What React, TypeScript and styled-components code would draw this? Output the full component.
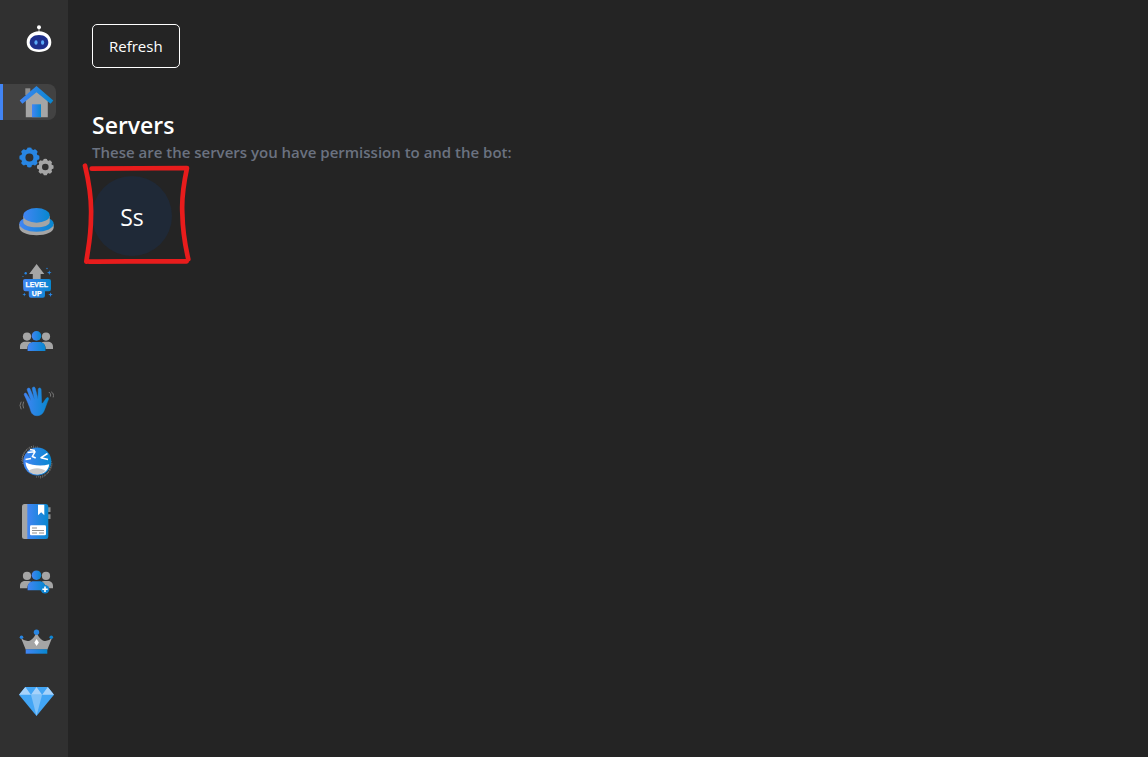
import React from "react";
import styled, { createGlobalStyle } from "styled-components";

const GlobalStyle = createGlobalStyle`
  *, *::before, *::after { box-sizing: border-box; }
  body {
    margin: 0;
    background: #242424;
    color: #ffffff;
    font-family: "Open Sans", "Noto Sans", sans-serif;
  }
`;

const Shell = styled.div`
  display: flex;
  min-height: 100vh;
`;

const Sidebar = styled.nav`
  flex: 0 0 68px;
  min-width: 0;
  display: flex;
  flex-direction: column;
  gap: 24px;
  padding: 24px 12px 24px 0;
  background: #303030;
`;

const Logo = styled.a`
  display: block;
  height: 36px;
  padding-left: 21px;
`;

const NavItem = styled.a<{ $active?: boolean }>`
  display: block;
  height: 36px;
  padding-left: 15px;
  border-left: 3px solid ${(p) => (p.$active ? "#4285f4" : "transparent")};
  border-radius: 0 8px 8px 0;
  background: ${(p) => (p.$active ? "#424242" : "transparent")};
`;

const Icon = styled.svg`
  display: block;
  width: 36px;
  height: 36px;
  overflow: visible;
`;

const Main = styled.main`
  flex: 1;
  min-width: 0;
  padding: 24px;
`;

const RefreshButton = styled.button`
  display: block;
  height: 44px;
  padding: 0 16px;
  border: 1px solid #ffffff;
  border-radius: 5px;
  background: transparent;
  color: #ffffff;
  font-family: inherit;
  font-size: 15px;
  line-height: 24px;
`;

const Title = styled.h1`
  margin: 40px 0 0;
  font-size: 23px;
  font-weight: 600;
  line-height: 34px;
`;

const Subtitle = styled.p`
  margin: 0;
  color: #6b7280;
  font-size: 15px;
  font-weight: 600;
  line-height: 20px;
`;

const ServerList = styled.div`
  display: flex;
  flex-wrap: wrap;
  gap: 16px;
  padding-top: 14px;
`;

const Server = styled.div`
  position: relative;
`;

const Avatar = styled.button`
  display: block;
  width: 80px;
  height: 80px;
  padding: 2px 0 0;
  border: 0;
  border-radius: 50%;
  background: #1f2937;
  color: #ffffff;
  font-family: inherit;
  font-size: 23px;
  line-height: 32px;
`;

const Marker = styled.svg`
  position: absolute;
  left: -17px;
  top: -21px;
  width: 130px;
  height: 120px;
  pointer-events: none;
`;

const BLUE = "url(#blue)";
const GRAY = "#a5a5a5";

function Defs() {
  return (
    <defs>
      <linearGradient id="blue" x1="0" x2="1" y1="0" y2="0">
        <stop offset="0" stopColor="#4285f4" />
        <stop offset="1" stopColor="#0787cf" />
      </linearGradient>
    </defs>
  );
}

function Gear({ x, y, r, hole, fill }: { x: number; y: number; r: number; hole: number; fill: string }) {
  const teeth = [0, 45, 90, 135, 180, 225, 270, 315];
  return (
    <g transform={`translate(${x} ${y})`}>
      <circle r={(r * 0.84 + hole) / 2} fill="none" stroke={fill} strokeWidth={r * 0.84 - hole} />
      {teeth.map((a) => (
        <path
          key={a}
          transform={`rotate(${a})`}
          d={`M${-r * 0.26} ${-r * 0.72}L${-r * 0.2} ${-r * 0.96}Q${-r * 0.18} ${-r} 0 ${-r}Q${r * 0.18} ${-r} ${r * 0.2} ${-r * 0.96}L${r * 0.26} ${-r * 0.72}Z`}
          fill={fill}
        />
      ))}
    </g>
  );
}

function People() {
  return (
    <>
      <g fill={GRAY}>
        <circle cx="9" cy="12.6" r="4.1" />
        <circle cx="28" cy="12.6" r="4.1" />
        <path d="M2 25v-2.200c0-3.400 2.200-5 5.200-5h3.600c1.200 0 2 .3 2.700.8C10.200 20 9.500 22.400 9.300 25z" />
        <path d="M35 25v-2.200c0-3.400-2.200-5-5.200-5h-3.600c-1.200 0-2 .3-2.700.8 3.300 1.400 4 3.800 4.200 6.400z" />
      </g>
      <circle cx="18.500" cy="11.900" r="4.800" fill={BLUE} />
      <path d="M9.600 27v-2.500c0-4.400 2.400-6.500 6.200-6.500h5.400c3.800 0 6.200 2.100 6.200 6.500V27z" fill={BLUE} />
    </>
  );
}

const items: { name: string; art: React.ReactNode }[] = [
  {
    name: "Home",
    art: (
      <>
        <path d="M7.300 4.300h5v6.700h-5z" fill="#8f8f8f" />
        <path d="M7.800 15.500 18.600 6l11.200 9.500V33.200h-22z" fill={GRAY} />
        <path d="M14 20.300h9v12.900h-9z" fill={BLUE} />
        <path d="M18.500 2 35.300 16.500 32.600 19.800 18.500 8.300 4.400 19.800 1.700 16.500z" fill={BLUE} />
      </>
    ),
  },
  {
    name: "Settings",
    art: (
      <>
        <Gear x={11.400} y={13.400} r={10} hole={4} fill="#2886e3" />
        <Gear x={27.300} y={23} r={8.300} hole={3.300} fill={GRAY} />
      </>
    ),
  },
  {
    name: "Buttons",
    art: (
      <>
        <path d="M1.300 20v3.500c0 4.500 7.700 7.700 17.200 7.700s17.200-3.200 17.200-7.700V20z" fill={GRAY} />
        <ellipse cx="18.500" cy="19.800" rx="17.200" ry="7.900" fill={BLUE} />
        <path d="M5.300 12v6c0 3.300 6 5.300 13.200 5.300s13.200-2 13.200-5.300v-6z" fill={GRAY} />
        <ellipse cx="18.500" cy="11.400" rx="13.200" ry="7.300" fill={BLUE} />
      </>
    ),
  },
  {
    name: "Levels",
    art: (
      <>
        <path d="M18.600 0 26.300 10h-3.700v6h-7.800v-6h-3.700z" fill={GRAY} />
        <path
          d="M7 15h24q2 0 2 2v8q0 2.300-2 2.300h-4v4.200q0 2.200-2.200 2.200H13q-2.200 0-2.200-2.200v-4.200H7.500q-2.200 0-2.200-2.300l-.3-8q0-2 2-2z"
          fill={BLUE}
        />
        <g
          fill="#ffffff"
          stroke="#ffffff"
          strokeWidth=".25"
          fontFamily="Liberation Sans, sans-serif"
          fontSize="7"
          fontWeight="700"
          textAnchor="middle"
        >
          <text x="18.700" y="23">LEVEL</text>
          <text x="18.700" y="31.500">UP</text>
        </g>
        <g fill="#2886e3">
          <path d="m31.300 6.300.6 1.700 1.700.6-1.700.6-.6 1.700-.6-1.700-1.700-.6 1.700-.6zM32.500 28.300l.6 1.700 1.700.6-1.700.6-.6 1.700-.6-1.700-1.700-.6 1.700-.6zM6.300 28.500l.5 1.500 1.500.5-1.500.5-.5 1.500-.5-1.500-1.500-.5 1.500-.5z" />
          <circle cx="7.700" cy="9.300" r="1.200" />
          <circle cx="29" cy="4.500" r=".7" />
          <circle cx="5" cy="12.500" r=".6" />
        </g>
      </>
    ),
  },
  { name: "Members", art: <People /> },
  {
    name: "Welcome",
    art: (
      <>
        <path
          d="M13 27.500C11.500 22 8.500 15.500 6.400 11.200c-.9-1.900 1.300-2.900 2.300-1.300l4.500 7.200L9.300 6.200c-.7-2.100 2.100-3 2.900-1L16.500 15.500 14.300 5c-.4-2.200 2.500-2.700 3-.6l2.700 10.500.2-9.400c.1-2.100 2.900-2 2.900.1l.5 12.800c.2 1 .9 1.200 1.500.4l2.800-4c1.300-1.800 3.200-1.500 2.500.6-1.800 3.600-2.600 7.800-4.600 12-1.500 3-4 4.300-6.700 4.300-3.200 0-5.300-1.600-6.100-4.200z"
          fill={BLUE}
          stroke={BLUE}
          strokeWidth=".5"
        />
        <g fill="none" stroke="#777" strokeLinecap="round" strokeWidth="1">
          <path d="M31.200 8.200q2.200 1.200 1.500 4M33.500 8q2.800 1.500 1.800 5M5.500 18q-1.500 3 0 6M3 18q-2.200 3.300 0 7" />
        </g>
      </>
    ),
  },
  {
    name: "Fun",
    art: (
      <>
        <g fill="none" stroke="#777" strokeDasharray="1 1" strokeWidth="1">
          <path d="M5 20C3 9 9 3 20 3M4 17C4 8 10 2 17 2M18 33c10 0 16-6 15-17M22 34c7-2 12-8 12-15" />
        </g>
        <circle cx="19.300" cy="17.500" r="14" fill={BLUE} />
        <path d="M7.500 18.300c7 3.200 15.500 4.500 23.700 2-.6 6-5 10-11.500 10-6.700 0-11.500-4.500-12.200-12z" fill="#ffffff" />
        <path d="M10.500 27c4-3.600 12.500-3.800 17-.2-4 4.700-12.500 4.900-17 .2z" fill="#c9c9c9" />
        <path d="m9.500 8.500 7.500-.7-2.700 4.700 3.400 1.500M12 5.500l5 1M29.500 9.500 23 13.700l7 1.800M7.500 15.500l5.500-1" fill="none" stroke="#ffffff" strokeLinejoin="round" strokeWidth="1.500" />
      </>
    ),
  },
  {
    name: "Logs",
    art: (
      <>
        <path d="M29 3.300h3.500V8H29zM29 10.200h3.500V15H29z" fill="#8f8f8f" />
        <path d="M6.500 0H10v35H6.500Q4 35 4 32.500v-30Q4 0 6.500 0z" fill={GRAY} />
        <path d="M9.300 0H28q2.300 0 2.300 2.500v30Q30.300 35 28 35H9.300z" fill={BLUE} />
        <path d="M20 .7h6.300v10.500l-3.100-3-3.200 3z" fill="#ffffff" />
        <rect x="12" y="21.300" width="16" height="10" rx="1.300" fill="#ffffff" />
        <path d="M14 24h5M14 26.500h12M14 29h5M21 29h5" stroke="#8f8f8f" strokeWidth="1" />
      </>
    ),
  },
  {
    name: "Invites",
    art: (
      <>
        <g transform="translate(0 -.7)">
          <People />
        </g>
        <circle cx="27" cy="25.300" r="4.300" fill="#0f86d4" />
        <path d="M27 22.600V28M24.300 25.300h5.400" stroke="#ffffff" strokeWidth="1.600" />
      </>
    ),
  },
  {
    name: "Roles",
    art: (
      <>
        <path d="M3 14q5 4.500 9.200 2.500Q16.500 14 18.500 8q2 6 6.300 8.500Q29 18.500 34 14l-4.600 11.500H7.700z" fill={GRAY} />
        <path d="M7.700 25.300h21.600v4.400H7.700z" fill={BLUE} />
        <circle cx="18.500" cy="8.200" r="2.700" fill="#2886e3" />
        <circle cx="3.500" cy="13.300" r="1.800" fill="#2886e3" />
        <circle cx="33.300" cy="13.300" r="1.800" fill="#0f86d4" />
        <path d="m18.600 15 2.300 3.500-2.300 3.500-2.300-3.500z" fill="#ffffff" />
      </>
    ),
  },
  {
    name: "Premium",
    art: (
      <>
        <path d="M7.300 3h22.500L36 10.700 18.500 32 1 10.700z" fill="#42a5f5" />
        <path d="M1 10.700 7.300 3l5.700 7.700zM36 10.700 29.800 3l-5.700 7.700zM13 10.700 18.500 3l5.600 7.700z" fill="#a6d2fa" />
        <path d="M13 10.700h11.100L18.500 32z" fill="#7fc1f8" />
      </>
    ),
  },
];

export default function App() {
  return (
    <>
      <GlobalStyle />
      <Shell>
        <Sidebar aria-label="Main">
          <Logo href="#" aria-label="Bot">
            <Icon viewBox="0 0 36 36" aria-hidden="true">
              <Defs />
              <path d="M18 4v5" stroke="#bbb" strokeWidth="1" />
              <circle cx="18" cy="3.300" r="2" fill="#ffffff" />
              <path d="M18 7.300c7.500 0 12.300 5 12.300 11 0 6.200-5 9.700-12.300 9.700S5.700 24.500 5.700 18.300c0-6 4.800-11 12.300-11z" fill="#ffffff" />
              <path d="M18 11c6 0 9.300 3.300 9.300 7.500S24 25.500 18 25.500s-9.300-2.800-9.300-7S12 11 18 11z" fill="#1e2f8c" />
              <ellipse cx="15" cy="18.500" rx="1.600" ry="2.300" fill="#5aa9f7" />
              <ellipse cx="21.600" cy="18.500" rx="1.600" ry="2.300" fill="#5aa9f7" />
            </Icon>
          </Logo>
          {items.map((item, i) => (
            <NavItem key={item.name} href="#" aria-label={item.name} $active={i === 0}>
              <Icon viewBox="0 0 36 36" aria-hidden="true">
                {item.art}
              </Icon>
            </NavItem>
          ))}
        </Sidebar>
        <Main>
          <RefreshButton type="button">Refresh</RefreshButton>
          <Title>Servers</Title>
          <Subtitle>These are the servers you have permission to and the bot:</Subtitle>
          <ServerList>
            <Server>
              <Avatar type="button">Ss</Avatar>
              <Marker viewBox="0 0 390 360" aria-hidden="true">
                <g fill="none" stroke="#e81c1c" strokeLinecap="round" strokeLinejoin="round" strokeWidth="14">
                  <path d="M30 32C44 90 50 140 48 185c0 60-8 90-14 135" />
                  <path d="M50 41 336 39C325 90 320 140 322 175c1 55 8 95 18 138" />
                  <path d="M42 320c90-2 200 0 293-1" />
                </g>
              </Marker>
            </Server>
          </ServerList>
        </Main>
      </Shell>
    </>
  );
}
